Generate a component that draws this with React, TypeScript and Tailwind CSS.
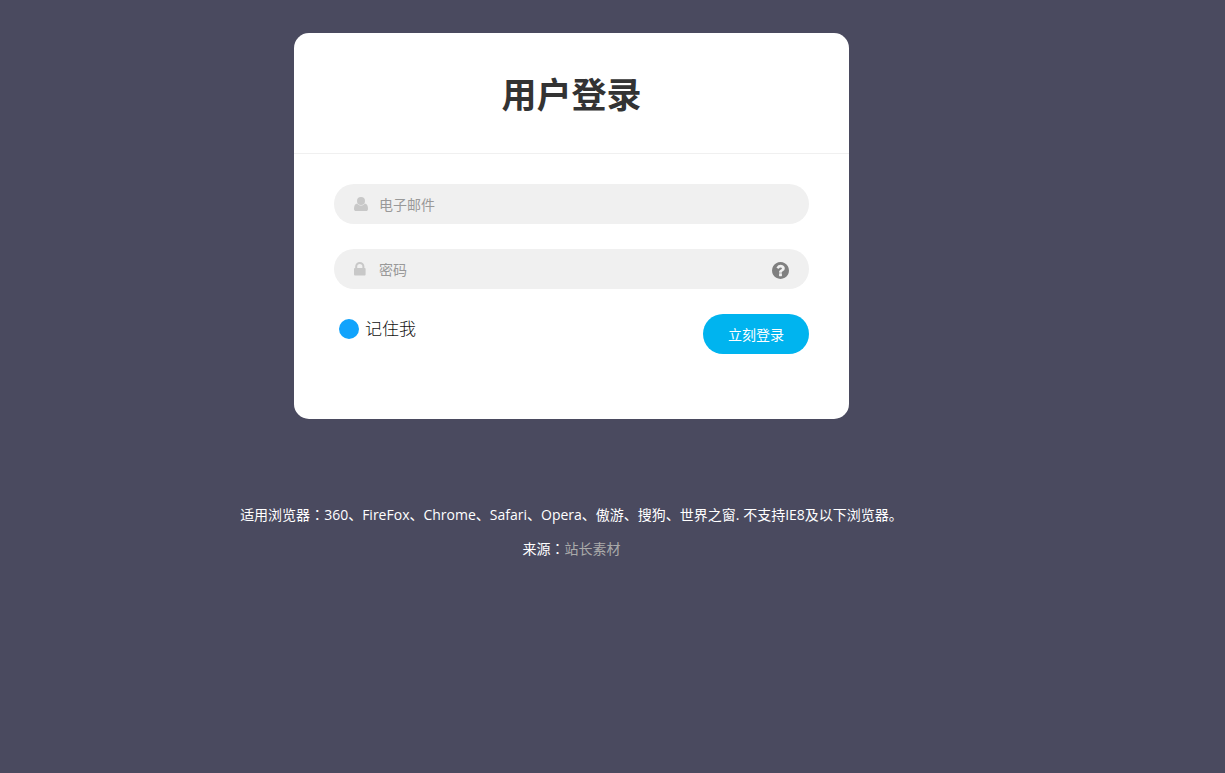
interface IconProps {
  className?: string;
}

function UserIcon({ className }: IconProps) {
  return (
    <svg viewBox="0 0 14 14" className={className} fill="currentColor" aria-hidden="true">
      <ellipse cx="7" cy="4" rx="4" ry="4" />
      <path d="M3.300 6.500C1.100 6.900 0 8.600 0 11.700 0 13.200.7 14 2.200 14h9.600c1.500 0 2.200-.8 2.200-2.300 0-3.100-1.100-4.800-3.300-5.200C9.900 7.900 8.600 8.500 7 8.500S4.100 7.900 3.300 6.500z" />
    </svg>
  );
}

function LockIcon({ className }: IconProps) {
  return (
    <svg viewBox="0 0 12 14" className={className} fill="currentColor" aria-hidden="true">
      <path d="M2.200 7V4.600a3.600 3.600 0 0 1 7.200 0V7" fill="none" stroke="currentColor" strokeWidth="2" />
      <rect y="6" width="11.600" height="7.500" rx="1" />
    </svg>
  );
}

function QuestionIcon({ className }: IconProps) {
  return (
    <svg viewBox="0 0 1536 1536" className={className} fill="currentColor" aria-hidden="true">
      <g transform="translate(0 1408) scale(1 -1)">
        <path d="M896 160v192q0 14 -9 23t-23 9h-192q-14 0 -23 -9t-9 -23v-192q0 -14 9 -23t23 -9h192q14 0 23 9t9 23zM1152 832q0 88 -55.5 163t-138.500 116t-170 41q-243 0 -371 -213q-15 -24 8 -42l132 -100q7 -6 19 -6q16 0 25 12q53 68 86 92q34 24 86 24q48 0 85.500 -26t37.500 -59q0 -38 -20 -61t-68 -45q-63 -28 -115.500 -86.500t-52.500 -125.500v-36q0 -14 9 -23t23 -9h192q14 0 23 9t9 23q0 19 21.500 49.500t54.500 49.500q32 18 49 28.500t46 35t44.500 48t28 60.500t12.500 81zM1536 640q0 -209 -103 -385.500t-279.500 -279.500t-385.500 -103t-385.500 103t-279.500 279.500t-103 385.500t103 385.500t279.500 279.500t385.500 103t385.500 -103t279.500 -279.500t103 -385.500z" />
      </g>
    </svg>
  );
}

// The traditional face centres the full-width colon in its cell
function Colon() {
  return (
    <span className="font-['Noto_Sans_CJK_TC',sans-serif] leading-none" lang="zh-TW">
      ：
    </span>
  );
}

const inputClass =
  "h-10 min-w-0 flex-1 bg-transparent pt-px text-sm text-[#555] outline-none placeholder:text-[#999]";

function LoginForm() {
  return (
    <form
      className="mx-auto w-full max-w-[555px] rounded-[15px] bg-white pb-[65px]"
      onSubmit={(e) => e.preventDefault()}
    >
      <h1 className="border-b border-[#f0f0f0] pt-9 pb-8 text-center text-[35px] leading-[52px] font-bold text-[#333]">
        用户登录
      </h1>

      <div className="flex flex-col gap-[25px] px-10 pt-[30px]">
        <label className="flex h-10 items-center rounded-[20px] bg-[#f0f0f0] px-5">
          <UserIcon className="mr-[11px] h-3.5 w-3.5 text-[#c8c8c8]" />
          <input type="email" placeholder="电子邮件" aria-label="电子邮件" className={inputClass} />
        </label>

        <div className="flex h-10 items-center rounded-[20px] bg-[#f0f0f0] px-5">
          <LockIcon className="mr-[13px] h-3.5 w-3 text-[#c8c8c8]" />
          <input type="password" placeholder="密码" aria-label="密码" className={inputClass} />
          <a href="#" aria-label="忘记密码" className="pt-[3px] text-[#808080]">
            <QuestionIcon className="h-[17px] w-[17px]" />
          </a>
        </div>

        <div className="flex items-start justify-between">
          <label className="flex items-center gap-1.5 pt-0.5 pl-[5px] text-[17px] leading-[26px] font-light text-[#111]">
            <input type="checkbox" className="h-5 w-5 appearance-none rounded-full bg-[#11a3fc]" />
            记住我
          </label>
          <button
            type="submit"
            className="h-10 rounded-[20px] bg-[#00b4ef] px-[25px] pt-0.5 text-sm text-white"
          >
            立刻登录
          </button>
        </div>
      </div>
    </form>
  );
}

export default function App() {
  return (
    <div className="min-h-screen bg-[#4a4a5f] pt-[33px] pr-[82px] font-['Open_Sans','Noto_Sans_CJK_SC',sans-serif]">
      <LoginForm />

      {/* Browser support and credits */}
      <footer className="mt-[86px] space-y-3.5 text-center text-sm leading-5 text-white">
        <p>
          适用浏览器
          <Colon />
          360、FireFox、Chrome、Safari、Opera、傲游、搜狗、世界之窗. 不支持IE8及以下浏览器。
        </p>
        <p>
          来源
          <Colon />
          <a href="#" className="text-[#aaa]">
            站长素材
          </a>
        </p>
      </footer>
    </div>
  );
}
